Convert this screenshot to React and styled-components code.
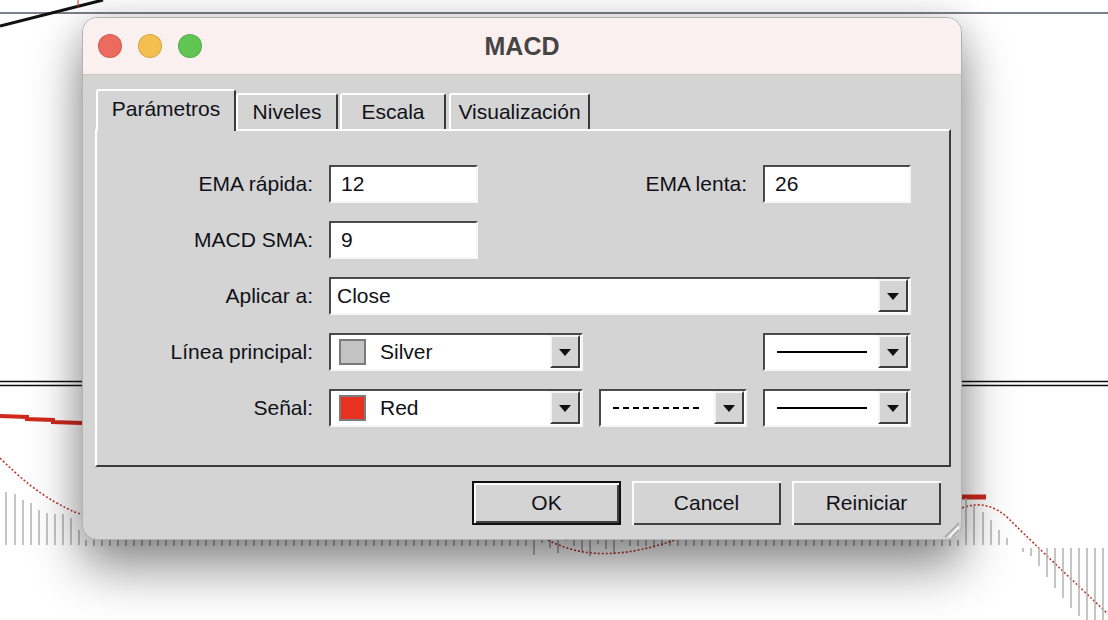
import React from "react";
import styled, { createGlobalStyle } from "styled-components";

const GlobalStyle = createGlobalStyle`
  html, body { margin: 0; padding: 0; background: #fff; }
  body { font-family: "Liberation Sans", Arial, sans-serif; }
`;

const Desktop = styled.div`
  position: relative;
  width: 1108px;
  height: 620px;
  overflow: hidden;
  background: #fff;
`;

const ChartLayer = styled.svg`
  position: absolute;
  left: 0;
  top: 0;
`;

const Window = styled.section`
  position: absolute;
  left: 82px;
  top: 17px;
  width: 880px;
  height: 523px;
  box-sizing: border-box;
  display: flex;
  flex-direction: column;
  border: 1px solid #b2b2b2;
  border-radius: 15px;
  background: #d4d4d4;
  box-shadow: 0 28px 52px rgba(0, 0, 0, 0.44), 0 0 34px rgba(0, 0, 0, 0.14);
  overflow: hidden;
  color: #111118;
`;

const TitleBar = styled.header`
  box-sizing: border-box;
  height: 57px;
  flex: none;
  display: grid;
  grid-template-columns: 1fr auto 1fr;
  align-items: center;
  padding: 0 15px;
  background: #faf0f0;
  border-bottom: 1px solid #cbc6c6;
`;

const Lights = styled.div`
  display: flex;
  gap: 16px;
`;

const Light = styled.span`
  width: 24px;
  height: 24px;
  box-sizing: border-box;
  border-radius: 50%;
  background: ${(p) => p.$color};
  border: 1px solid rgba(0, 0, 0, 0.12);
`;

const Title = styled.h1`
  margin: 0;
  font-size: 25px;
  font-weight: 700;
  color: #484444;
`;

const Body = styled.div`
  flex: 1;
  display: flex;
  flex-direction: column;
  padding: 14px 10px 0 12px;
`;

const TabStrip = styled.div`
  display: flex;
  align-items: flex-end;
  height: 40px;
  padding-left: 1px;
  position: relative;
  z-index: 1;
`;

const Tab = styled.div`
  box-sizing: border-box;
  width: ${(p) => p.$w}px;
  height: ${(p) => (p.$active ? 42 : 36)}px;
  margin-right: ${(p) => p.$gap}px;
  margin-bottom: ${(p) => (p.$active ? -2 : 0)}px;
  display: flex;
  align-items: center;
  justify-content: center;
  padding-bottom: ${(p) => (p.$active ? 5 : 0)}px;
  border-top: 2px solid #fff;
  border-left: 2px solid #fff;
  border-right: 2px solid #3a3a3a;
  border-radius: 3px 3px 0 0;
  background: #d4d4d4;
  font-size: 21px;
`;

const Panel = styled.div`
  box-sizing: border-box;
  height: 338px;
  border: 2px solid;
  border-color: #fff #3c3c3c #3c3c3c #fff;
  padding-top: 34px;
`;

const Form = styled.div`
  display: grid;
  grid-template-columns: 216px 254px 148px 148px;
  grid-auto-rows: 38px;
  column-gap: 16px;
  row-gap: 18px;
`;

const Label = styled.label`
  grid-column: ${(p) => p.$col || 1};
  display: flex;
  align-items: center;
  justify-content: flex-end;
  font-size: 21px;
  white-space: nowrap;
`;

const Sunken = styled.div`
  grid-column: ${(p) => p.$col || "auto"};
  box-sizing: border-box;
  width: ${(p) => (p.$w ? `${p.$w}px` : "auto")};
  height: 38px;
  display: flex;
  align-items: center;
  background: #fff;
  border: 2px solid;
  border-color: #4a4a4a #f6f6f6 #f6f6f6 #4a4a4a;
  font-size: 21px;
`;

const FieldText = styled.span`
  flex: 1;
  padding-left: ${(p) => p.$pad}px;
  white-space: nowrap;
`;

const Swatch = styled.span`
  flex: none;
  box-sizing: border-box;
  width: 27px;
  height: 26px;
  margin-left: 8px;
  margin-right: 14px;
  background: ${(p) => p.$color};
  border: 2px solid #7e7a7a;
`;

const LinePreview = styled.svg`
  flex: 1;
  margin-left: 12px;
`;

const DropButton = styled.span`
  flex: none;
  align-self: flex-start;
  box-sizing: border-box;
  width: 30px;
  height: 33px;
  margin-right: 1px;
  display: flex;
  align-items: center;
  justify-content: center;
  background: #d4d4d4;
  border: 2px solid;
  border-color: #f4f4f4 #3c3c3c #3c3c3c #f4f4f4;

  &::after {
    content: "";
    border-left: 6px solid transparent;
    border-right: 6px solid transparent;
    border-top: 7px solid #111;
    margin-top: 2px;
  }
`;

const ButtonRow = styled.div`
  display: flex;
  justify-content: flex-end;
  gap: 11px;
  margin-top: 14px;
  padding-right: 10px;
`;

const Button = styled.button`
  box-sizing: border-box;
  width: 149px;
  height: 44px;
  font-family: inherit;
  font-size: 21px;
  color: #111118;
  background: #d4d4d4;
  border: ${(p) => (p.$default ? "2px solid #111" : "none")};
  box-shadow: inset 2px 2px 0 #fbfbfb, inset -2px -2px 0 #404040;
  padding: 0;
`;

const Grip = styled.svg`
  position: absolute;
  right: 1px;
  bottom: 1px;
`;

const leftBars = [
  [6, 492], [15, 494], [23, 500], [31, 503], [39, 510],
  [47, 513], [55, 514], [63, 514], [71, 518], [79, 530],
];

const rightBars = [
  [966, 498, 545], [974, 505, 545], [983, 512, 545], [991, 520, 545],
  [999, 530, 545], [1007, 538, 545], [1023, 548, 552], [1031, 548, 556],
  [1039, 548, 566], [1047, 548, 577], [1055, 548, 588], [1063, 548, 598],
  [1071, 548, 608], [1079, 548, 616], [1087, 548, 620], [1095, 548, 620],
  [1103, 548, 620],
];

const axisTicks = [];
for (let x = 86; x < 962; x += 8) {
  const deep = x > 528 && x < 628;
  axisTicks.push([x, deep ? 540 + ((x * 7) % 17) : 546]);
}

function Chart() {
  return (
    <ChartLayer width="1108" height="620" viewBox="0 0 1108 620">
      <line x1="0" y1="13" x2="1108" y2="13" stroke="#7b8089" strokeWidth="2" />
      <line x1="0" y1="26" x2="103" y2="0" stroke="#111" strokeWidth="3" />
      <line x1="78" y1="0" x2="78" y2="8" stroke="#d03020" strokeWidth="1" />
      <line x1="0" y1="381.5" x2="1108" y2="381.5" stroke="#111" strokeWidth="1.6" />
      <line x1="0" y1="385.5" x2="1108" y2="385.5" stroke="#111" strokeWidth="1.6" />
      <polyline points="0,416 27,417 27,419 53,420 53,422 82,423" fill="none" stroke="#d02a1e" strokeWidth="4" />
      <path d="M0 458 Q 30 488 55 502 T 84 514" fill="none" stroke="#c0392b" strokeWidth="1.6" strokeDasharray="2 2" />
      {leftBars.map(([x, y]) => (
        <line key={x} x1={x} y1={y} x2={x} y2="545" stroke="#b6b6b6" strokeWidth="1.6" />
      ))}
      {axisTicks.map(([x, y2]) => (
        <line key={x} x1={x} y1="540" x2={x} y2={y2} stroke="#9a9a9a" strokeWidth="1.4" />
      ))}
      <path d="M548 540 Q 600 568 680 538" fill="none" stroke="#c0392b" strokeWidth="1.6" strokeDasharray="2 2" />
      <line x1="962" y1="497" x2="986" y2="497" stroke="#d02a1e" strokeWidth="5" />
      <path d="M962 508 Q 988 498 1010 520 T 1108 614" fill="none" stroke="#c0392b" strokeWidth="1.6" strokeDasharray="2 2" />
      {rightBars.map(([x, y1, y2]) => (
        <line key={x} x1={x} y1={y1} x2={x} y2={y2} stroke="#b6b6b6" strokeWidth="1.6" />
      ))}
    </ChartLayer>
  );
}

function Combo({ col, w, children }) {
  return (
    <Sunken $col={col} $w={w}>
      {children}
      <DropButton />
    </Sunken>
  );
}

function Line({ dashed }) {
  return (
    <LinePreview height="4" viewBox="0 0 92 4" preserveAspectRatio="xMinYMid meet">
      <line x1="0" y1="2" x2="90" y2="2" stroke="#000" strokeWidth="2" strokeDasharray={dashed ? "6 4" : undefined} />
    </LinePreview>
  );
}

const tabs = [
  { name: "Parámetros", w: 140, gap: 0, active: true },
  { name: "Niveles", w: 102, gap: 2 },
  { name: "Escala", w: 106, gap: 3 },
  { name: "Visualización", w: 141, gap: 0 },
];

export default function App() {
  return (
    <>
      <GlobalStyle />
      <Desktop>
        <Chart />
        <Window>
          <TitleBar>
            <Lights>
              <Light $color="#ec6a5e" />
              <Light $color="#f4bf4f" />
              <Light $color="#61c554" />
            </Lights>
            <Title>MACD</Title>
            <span />
          </TitleBar>
          <Body>
            <TabStrip>
              {tabs.map((t) => (
                <Tab key={t.name} $w={t.w} $gap={t.gap} $active={t.active}>
                  {t.name}
                </Tab>
              ))}
            </TabStrip>
            <Panel>
              <Form>
                <Label>EMA rápida:</Label>
                <Sunken $w={149}><FieldText $pad={10}>12</FieldText></Sunken>
                <Label $col={3}>EMA lenta:</Label>
                <Sunken $w={148}><FieldText $pad={10}>26</FieldText></Sunken>

                <Label>MACD SMA:</Label>
                <Sunken $w={149}><FieldText $pad={10}>9</FieldText></Sunken>
                <span style={{ gridColumn: "3 / 5" }} />

                <Label>Aplicar a:</Label>
                <Combo col="2 / 5"><FieldText $pad={6}>Close</FieldText></Combo>

                <Label>Línea principal:</Label>
                <Combo><Swatch $color="#c3c3c3" /><FieldText $pad={0}>Silver</FieldText></Combo>
                <span />
                <Combo><Line /></Combo>

                <Label>Señal:</Label>
                <Combo><Swatch $color="#e8321f" /><FieldText $pad={0}>Red</FieldText></Combo>
                <Combo><Line dashed /></Combo>
                <Combo><Line /></Combo>
              </Form>
            </Panel>
            <ButtonRow>
              <Button $default>OK</Button>
              <Button>Cancel</Button>
              <Button>Reiniciar</Button>
            </ButtonRow>
          </Body>
          <Grip width="18" height="18" viewBox="0 0 18 18">
            <line x1="17" y1="3" x2="3" y2="17" stroke="#9c9c9c" strokeWidth="1.2" />
            <line x1="17" y1="7" x2="7" y2="17" stroke="#fff" strokeWidth="1.2" />
            <line x1="17" y1="10" x2="10" y2="17" stroke="#9c9c9c" strokeWidth="1.2" />
            <line x1="17" y1="14" x2="14" y2="17" stroke="#fff" strokeWidth="1.2" />
          </Grip>
        </Window>
      </Desktop>
    </>
  );
}
